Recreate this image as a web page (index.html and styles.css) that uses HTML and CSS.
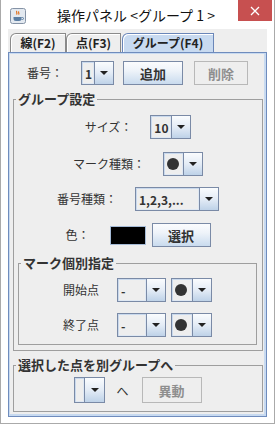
FILE: index.html
```html
<!DOCTYPE html>
<html lang="ja">
<head>
    <meta charset="UTF-8">
    <title>操作パネル</title>
    <link rel="stylesheet" href="styles.css">
</head>
<body>
    <div class="window">
        <div class="titlebar">
            <svg class="app-icon" width="16" height="16" viewBox="0 0 16 16">
                <rect x="0.5" y="0.5" width="15" height="15" rx="2" fill="#e3e9f0" stroke="#8593a6"/>
                <path d="M7 3c-1.5 1 1 2 -0.5 3.5M9 3.5c-1.5 1 1 2 -0.5 3" stroke="#e2711d" stroke-width="1.2" fill="none"/>
                <path d="M3.5 9h8v1.5a2.5 2.5 0 0 1-2.5 2.5h-3a2.5 2.5 0 0 1-2.5-2.5z" fill="#5b7ea3"/>
                <path d="M11.5 9.5h1a1 1 0 0 1 0 2h-1" stroke="#5b7ea3" fill="none"/>
            </svg>
            <span class="title">操作パネル &lt;グループ 1 &gt;</span>
            <span class="close">
                <svg width="10" height="10" viewBox="0 0 10 10">
                    <path d="M1 1L9 9M9 1L1 9" stroke="#fff" stroke-width="1.3"/>
                </svg>
            </span>
        </div>

        <div class="client">
            <div class="tabs">
                <div class="tab tab-line">線(F2)</div>
                <div class="tab tab-point">点(F3)</div>
                <div class="tab tab-group selected">グループ(F4)</div>
            </div>

            <div class="tab-panel">
                <div class="row row-number">
                    <span class="label">番号：</span>
                    <div class="combo combo-number">
                        <span class="combo-value">1</span>
                        <span class="combo-arrow"></span>
                    </div>
                    <button class="btn btn-add">追加</button>
                    <button class="btn btn-delete" disabled>削除</button>
                </div>

                <fieldset class="group group-settings">
                    <legend>グループ設定</legend>

                    <div class="row row-size">
                        <span class="label">サイズ：</span>
                        <div class="combo combo-size">
                            <span class="combo-value">10</span>
                            <span class="combo-arrow"></span>
                        </div>
                    </div>

                    <div class="row row-mark">
                        <span class="label">マーク種類：</span>
                        <div class="combo combo-mark">
                            <span class="combo-value"><span class="dot"></span></span>
                            <span class="combo-arrow"></span>
                        </div>
                    </div>

                    <div class="row row-style">
                        <span class="label">番号種類：</span>
                        <div class="combo combo-style">
                            <span class="combo-value">1,2,3,...</span>
                            <span class="combo-arrow"></span>
                        </div>
                    </div>

                    <div class="row row-color">
                        <span class="label">色：</span>
                        <span class="swatch"></span>
                        <button class="btn btn-select">選択</button>
                    </div>

                    <fieldset class="group group-marks">
                        <legend>マーク個別指定</legend>

                        <div class="row row-start">
                            <span class="label">開始点</span>
                            <div class="combo combo-point">
                                <span class="combo-value">-</span>
                                <span class="combo-arrow"></span>
                            </div>
                            <div class="combo combo-mark combo-end-mark">
                                <span class="combo-value"><span class="dot"></span></span>
                                <span class="combo-arrow"></span>
                            </div>
                        </div>

                        <div class="row row-end">
                            <span class="label">終了点</span>
                            <div class="combo combo-point">
                                <span class="combo-value">-</span>
                                <span class="combo-arrow"></span>
                            </div>
                            <div class="combo combo-mark combo-end-mark">
                                <span class="combo-value"><span class="dot"></span></span>
                                <span class="combo-arrow"></span>
                            </div>
                        </div>
                    </fieldset>
                </fieldset>

                <fieldset class="group group-move">
                    <legend>選択した点を別グループへ</legend>
                    <div class="row row-move">
                        <div class="combo combo-target">
                            <span class="combo-value"></span>
                            <span class="combo-arrow"></span>
                        </div>
                        <span class="to-label">へ</span>
                        <button class="btn btn-move" disabled>異動</button>
                    </div>
                </fieldset>
            </div>
        </div>
    </div>
</body>
</html>
```

FILE: styles.css
```css
* {
    box-sizing: border-box;
    margin: 0;
    padding: 0;
}

body {
    width: 275px;
    height: 425px;
    background: #fff;
    font-family: "Noto Sans CJK JP", "Noto Sans", sans-serif;
    color: #333;
}

.window {
    width: 275px;
    height: 424px;
    background: #fff;
    border: 1px solid #aaa;
    border-top: none;
    display: flex;
    flex-direction: column;
}

/* title bar */
.titlebar {
    height: 29px;
    display: flex;
    align-items: flex-start;
}

.app-icon {
    margin: 8px 0 0 9px;
}

.title {
    flex: 1;
    text-align: center;
    font-size: 14px;
    line-height: 16px;
    margin-top: 7px;
    padding-left: 8px;
    color: #111;
}

.close {
    width: 34px;
    height: 21px;
    margin-right: 2px;
    background: #c75050;
    display: flex;
    align-items: center;
    justify-content: center;
}

/* client area */
.client {
    flex: 1;
    margin: 0 7px 6px 7px;
    padding-top: 4px;
    background: #eee;
    display: flex;
    flex-direction: column;
}

.tabs {
    display: flex;
    height: 19px;
    padding-left: 2px;
}

.tab {
    height: 19px;
    border: 1px solid #8a8a8a;
    border-bottom: none;
    border-top-left-radius: 6px;
    background: #eee;
    box-shadow: inset 1px 1px 0 #fff;
    font-size: 12px;
    font-weight: bold;
    line-height: 17px;
    text-align: center;
    color: #222;
}

.tab-line {
    width: 56px;
}

.tab-point {
    width: 55px;
}

.tab-group {
    width: 92px;
    margin-left: 1px;
}

.tab.selected {
    background: #c8daf0;
    border-color: #6a86b8;
}

.tab-panel {
    flex: 1;
    border: 1px solid #6f8cbd;
    box-shadow: inset 1px 1px 0 #c8daf0, inset -2px -2px 0 #c8daf0;
}

/* rows */
.row {
    display: flex;
    align-items: center;
    justify-content: center;
    height: 24px;
}

.label {
    font-size: 12px;
    line-height: 14px;
    margin-right: 18px;
    color: #333;
}

.row-number {
    margin-top: 8px;
}

.row-size {
    margin-top: 9px;
}

.row-mark {
    margin-top: 13px;
}

.row-style {
    margin-top: 11px;
}

.row-color {
    margin-top: 12px;
}

.row-start {
    margin-top: 8px;
}

.row-end {
    margin-top: 11px;
}

.row-move {
    margin-top: 5px;
    height: 26px;
}

/* combo boxes */
.combo {
    display: flex;
    height: 24px;
    border: 1px solid #7a8aa6;
    background: #eee;
}

.combo-value {
    flex: 1;
    display: flex;
    align-items: center;
    padding-left: 3px;
    font-size: 12px;
    font-weight: bold;
    color: #333;
    box-shadow: inset 1px 1px 0 #c9d9ed, inset -1px -1px 0 #dfe8f3;
}

.combo-arrow {
    width: 19px;
    border-left: 1px solid #7a8aa6;
    background: linear-gradient(#fafcfe, #e4ecf6 50%, #bed2e8);
    display: flex;
    align-items: center;
    justify-content: center;
}

.combo-arrow::after {
    content: "";
    border-left: 4px solid transparent;
    border-right: 4px solid transparent;
    border-top: 4px solid #222;
}

.combo-number {
    width: 33px;
}

.combo-size {
    width: 41px;
}

.combo-mark {
    width: 40px;
}

.combo-style {
    width: 84px;
}

.combo-point {
    width: 49px;
}

.combo-end-mark {
    width: 41px;
    margin-left: 5px;
}

.combo-target {
    width: 31px;
    height: 26px;
}

.combo-target .combo-arrow {
    width: 20px;
}

.dot {
    width: 12px;
    height: 12px;
    border-radius: 50%;
    background: #333;
}

/* buttons */
.btn {
    height: 24px;
    border: 1px solid #7a8aa6;
    background: linear-gradient(#fbfcfe 0%, #eef3f9 40%, #c9dbee 100%);
    font-family: inherit;
    font-size: 13px;
    font-weight: bold;
    color: #333;
}

.btn:disabled {
    border-color: #b8b8b8;
    background: #eee;
    color: #8e8e8e;
}

.btn-add {
    width: 60px;
    margin-left: 9px;
}

.btn-delete {
    width: 54px;
    margin-left: 11px;
}

.btn-select {
    width: 59px;
    margin-left: 6px;
}

.btn-move {
    width: 60px;
    height: 26px;
}

.swatch {
    width: 36px;
    height: 19px;
    margin-left: 2px;
    background: #000;
    border: 1px solid #a6bbd6;
}

.to-label {
    font-size: 12px;
    margin: 0 13px 0 11px;
    color: #333;
}

/* titled groups */
.group {
    border: 1px solid #9e9e9e;
}

.group legend {
    margin-left: 2px;
    padding: 0 2px;
    font-size: 13px;
    font-weight: bold;
    line-height: 14px;
    color: #333;
}

.group-settings {
    margin: 7px 3px 0 4px;
    padding-bottom: 5px;
}

.group-marks {
    margin: 9px 5px 0 4px;
    padding-bottom: 7px;
}

.group-move {
    margin: 7px 3px 0 4px;
    padding-bottom: 8px;
}
```
